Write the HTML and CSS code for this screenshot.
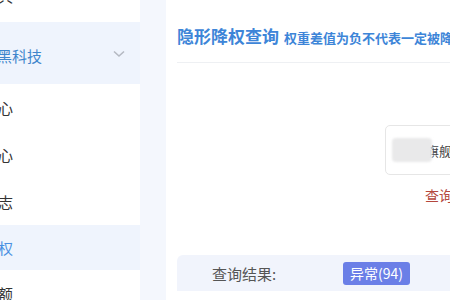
FILE: index.html
```html
<!DOCTYPE html>
<html lang="zh-CN">

<head>
    <meta charset="UTF-8">
    <meta name="viewport" content="width=device-width, initial-scale=1.0">
    <title>隐形降权查询</title>
    <link rel="stylesheet" href="styles.css">
</head>

<body>
    <div class="page">
        <ul class="side">
            <li class="side-item top"><span class="cut">工具</span></li>
            <li class="side-group">
                <span class="cut-left">黑科技</span>
                <svg class="arrow" width="12" height="8" viewBox="0 0 12 8">
                    <path d="M1 1.5 L6 6 L11 1.5" fill="none" stroke="#b5b9c2" stroke-width="1.6"/>
                </svg>
            </li>
            <li class="side-item"><span>心</span></li>
            <li class="side-item"><span>心</span></li>
            <li class="side-item"><span>志</span></li>
            <li class="side-item active"><span>权</span></li>
            <li class="side-item"><span>额</span></li>
        </ul>

        <div class="main">
            <div class="head">
                <h1 class="title">隐形降权查询</h1>
                <span class="tip">权重差值为负不代表一定被降权，仅供参考</span>
            </div>

            <div class="search">
                <div class="input-box">
                    <span class="blur"></span>
                    <span class="input-text">旗舰版</span>
                </div>
            </div>
            <div class="query-link">查询记录</div>

            <div class="result">
                <span class="result-label">查询结果:</span>
                <span class="badge">异常(94)</span>
            </div>
        </div>
    </div>
</body>

</html>
```

FILE: styles.css
```css
* {
    margin: 0;
    padding: 0;
    box-sizing: border-box;
}

body {
    width: 450px;
    height: 300px;
    overflow: hidden;
    background-color: #f4f7fd;
    font-family: "Noto Sans CJK SC", "Liberation Sans", sans-serif;
}

.page {
    display: flex;
    gap: 26px;
    height: 300px;
}

li {
    list-style: none;
}

/* sidebar */
.side {
    width: 140px;
    flex-shrink: 0;
    margin-top: -28px;
    overflow: hidden;
}

.side-item,
.side-group {
    display: flex;
    align-items: center;
    height: 47px;
    background-color: #fff;
    font-size: 15px;
    color: #333;
    white-space: nowrap;
}

.side-item.top {
    height: 50px;
    align-items: flex-end;
    padding-bottom: 16px;
}

.side-item.top .cut {
    margin-left: -17px;
}

.side-item span {
    margin-left: -2px;
}

.side-group {
    height: 62px;
    justify-content: space-between;
    padding-right: 15px;
    background-color: #eff4fd;
    color: #3f86cc;
}

.side-group .cut-left {
    margin-left: -3px;
    margin-top: 4px;
}

.side-group .arrow {
    margin-top: 1px;
}

.side-item.active {
    height: 45px;
    background-color: #eff4fd;
    color: #4a90e2;
}

/* main panel */
.main {
    flex: 1;
    min-width: 0;
    padding-left: 11px;
    background-color: #fff;
    overflow: hidden;
}

.head {
    display: flex;
    align-items: baseline;
    gap: 5px;
    height: 63px;
    padding-top: 24px;
    border-bottom: 1px solid #eef0f3;
    white-space: nowrap;
}

.title {
    font-size: 17px;
    line-height: 24px;
    font-weight: bold;
    color: #3d85d8;
}

.tip {
    font-size: 13px;
    font-weight: bold;
    color: #3d85d8;
}

.search {
    margin-top: 62px;
    padding-left: 208px;
}

.input-box {
    display: flex;
    align-items: center;
    width: 200px;
    height: 50px;
    padding-left: 6px;
    border: 1px solid #e6e6e6;
    border-radius: 5px;
    white-space: nowrap;
}

.blur {
    width: 40px;
    height: 24px;
    margin-right: -6px;
    background-color: #e9e9ea;
    border-radius: 4px;
    filter: blur(1px);
    position: relative;
    z-index: 1;
}

.input-text {
    font-size: 13px;
    color: #444;
}

.query-link {
    margin-top: 10px;
    padding-left: 248px;
    line-height: 20px;
    font-size: 14px;
    color: #b4473d;
    white-space: nowrap;
}

.result {
    display: flex;
    align-items: center;
    height: 36px;
    margin-top: 50px;
    padding-left: 35px;
    background-color: #f1f4fc;
    border-radius: 6px 0 0 0;
    white-space: nowrap;
}

.result-label {
    width: 131px;
    font-size: 15px;
    color: #555;
}

.badge {
    padding: 0 7px;
    height: 23px;
    line-height: 23px;
    font-size: 14px;
    color: #fff;
    background-color: #6b7fe7;
    border-radius: 3px;
}
```
